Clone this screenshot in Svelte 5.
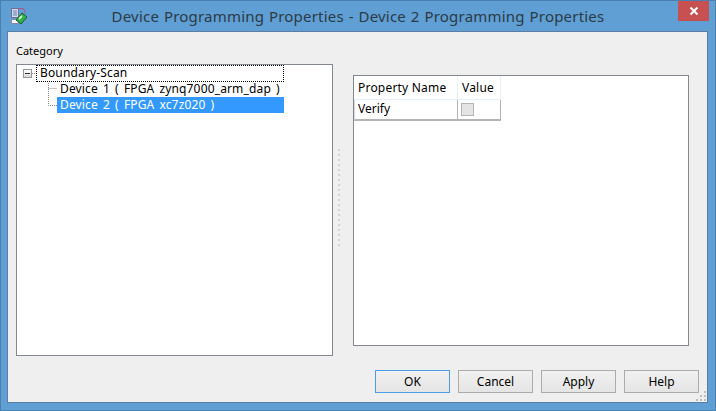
<script>
  const devices = [
    { label: "Device 1 ( FPGA zynq7000_arm_dap )", lines: "M21.500 2V16M21.500 7.500H30" },
    { label: "Device 2 ( FPGA xc7z020 )", lines: "M21.500 0V8.500H30", selected: true }
  ];
  const buttons = ["OK", "Cancel", "Apply", "Help"];
  const grip = [[8, 0], [4, 4], [8, 4], [0, 8], [4, 8], [8, 8]];
</script>

<div class="window">
  <div class="titlebar">
    <svg class="app-icon" width="17" height="18" viewBox="0 0 17 18">
      <path d="M1.500 1.500h7v9h-7z" fill="#d5dce8" stroke="#6f6a98" />
      <path d="M3 4h4M3 6h4M3 8h4" stroke="#5f82b8" />
      <path d="M1.500 12.500h7v4h-7z" fill="#f2f3f6" stroke="#8a88a8" />
      <path d="M8.500 1.500h5l2 5" fill="none" stroke="#b0508c" />
      <path d="M6 13l6-7 5 4-6 7z" fill="#2fb04a" stroke="#14602a" />
      <path d="M9 12l3-3" stroke="#c8f0c0" stroke-width="2" />
    </svg>
    <div class="title">Device Programming Properties - Device 2 Programming Properties</div>
    <div class="close">
      <svg width="10" height="10" viewBox="0 0 10 10"><path d="M1.500 1.500l7 7M8.500 1.500l-7 7" stroke="#fff" stroke-width="2" /></svg>
    </div>
  </div>

  <div class="client">
    <div class="category">Category</div>
    <div class="panes">
      <div class="tree">
        <div class="root">
          <span class="expander"><i></i></span>
          <svg class="stub" width="4" height="16"><path d="M0 8.500H4" stroke="#888" stroke-dasharray="1 1" /></svg>
          <span class="root-label">Boundary-Scan</span>
        </div>
        {#each devices as d}
          <div class="node">
            <svg width="30" height="16"><path d={d.lines} fill="none" stroke="#888" stroke-dasharray="1 1" /></svg>
            <span class="node-label" class:selected={d.selected}>{d.label}</span>
          </div>
        {/each}
      </div>

      <div class="splitter">
        {#each { length: 20 } as _}<i></i>{/each}
      </div>

      <div class="props">
        <div class="grid">
          <div class="head name">Property Name</div>
          <div class="head value">Value</div>
          <div class="cell name">Verify</div>
          <div class="cell value"><span class="check"></span></div>
        </div>
      </div>
    </div>

    <div class="footer">
      {#each buttons as b, i}
        <button class:active={i === 0}>{b}</button>
      {/each}
    </div>
    <svg class="grip" width="11" height="11">
      {#each grip as [x, y]}<rect {x} {y} width="2" height="2" fill="#bdbdbd" />{/each}
    </svg>
  </div>
</div>

<style>
  :global(body) {
    margin: 0;
  }
  .window {
    width: 716px;
    height: 411px;
    box-sizing: border-box;
    display: flex;
    flex-direction: column;
    background: #5f9fd3;
    border: 1px solid #4a7fb0;
    padding: 0 7px 7px 6px;
    font-family: "Noto Sans", sans-serif;
    font-size: 12px;
    color: #000;
  }
  .titlebar {
    height: 30px;
    display: flex;
    align-items: flex-start;
    flex: none;
  }
  .app-icon {
    margin: 6px 0 0 3px;
    flex: none;
  }
  .title {
    width: 620px;
    margin-left: 21px;
    text-align: center;
    font-size: 15px;
    line-height: 30px;
    color: #2c3a46;
    letter-spacing: 0.2px;
    word-spacing: 0.75px;
    white-space: nowrap;
    flex: none;
  }
  .close {
    width: 31px;
    height: 20px;
    margin-left: 10px;
    background: #c75050;
    display: flex;
    align-items: center;
    justify-content: center;
    flex: none;
  }
  .client {
    flex: 1;
    position: relative;
    background: #efefef;
    border: 1px solid #5a7ea3;
    padding: 0 8px;
    display: flex;
    flex-direction: column;
    min-height: 0;
  }
  .category {
    height: 32px;
    line-height: 38px;
    font-size: 11px;
    flex: none;
  }
  .panes {
    display: flex;
    height: 292px;
    flex: none;
  }
  .tree {
    width: 317px;
    box-sizing: border-box;
    background: #fff;
    border: 1px solid #828790;
    flex: none;
    letter-spacing: 0.15px;
  }
  .root {
    display: flex;
    align-items: center;
    height: 16px;
    padding-left: 6px;
  }
  .expander {
    width: 9px;
    height: 9px;
    box-sizing: border-box;
    border: 1px solid #969696;
    background: linear-gradient(#fff, #d8d8d8);
    display: flex;
    align-items: center;
    justify-content: center;
    flex: none;
  }
  .expander i {
    width: 5px;
    height: 1px;
    background: #333;
  }
  .stub {
    flex: none;
  }
  .root-label {
    box-sizing: border-box;
    flex: 1;
    height: 17px;
    margin-right: 48px;
    line-height: 14px;
    padding-left: 3px;
    border: 1px dotted #000;
    white-space: nowrap;
  }
  .node {
    display: flex;
    height: 16px;
    margin-left: 10px;
    align-items: stretch;
  }
  .node svg {
    flex: none;
  }
  .node-label {
    width: 227px;
    padding-left: 3px;
    box-sizing: border-box;
    line-height: 16px;
    word-spacing: 1.800px;
    white-space: nowrap;
  }
  .selected {
    background: #3399ff;
    color: #fff;
  }
  .splitter {
    width: 20px;
    flex: none;
    display: flex;
    flex-direction: column;
    align-items: center;
    justify-content: center;
    gap: 3px;
    padding: 0 8px 25px 0;
    box-sizing: border-box;
  }
  .splitter i {
    width: 2px;
    height: 2px;
    flex: none;
    background: #d4d4d4;
  }
  .props {
    margin-top: 11px;
    width: 336px;
    height: 271px;
    box-sizing: border-box;
    background: #fff;
    border: 1px solid #828790;
    flex: none;
  }
  .grid {
    display: grid;
    grid-template-columns: 104px 43px;
    grid-template-rows: 24px 21px;
    width: 147px;
  }
  .head {
    line-height: 23px;
    padding-left: 4px;
    letter-spacing: 0.2px;
    border-right: 1px solid #e6effa;
    border-bottom: 1px solid #e6effa;
  }
  .cell {
    border-bottom: 2px solid #b4b4b4;
    border-right: 1px solid #b4b4b4;
    line-height: 18px;
    padding-left: 3px;
  }
  .cell.name {
    border-left: 1px solid #d8d8d8;
  }
  .check {
    display: block;
    width: 13px;
    height: 13px;
    margin-top: 3px;
    box-sizing: border-box;
    background: #e4e4e4;
    border: 1px solid #b4b4b4;
  }
  .footer {
    display: flex;
    justify-content: flex-end;
    gap: 8px;
    margin-top: 14px;
  }
  button {
    width: 75px;
    height: 23px;
    padding: 0;
    font: inherit;
    color: #000;
    background: linear-gradient(#f0f0f0, #e5e5e5);
    border: 1px solid #acacac;
  }
  button.active {
    border-color: #4a9be8;
  }
  .grip {
    position: absolute;
    right: 0;
    bottom: 0;
  }
</style>
